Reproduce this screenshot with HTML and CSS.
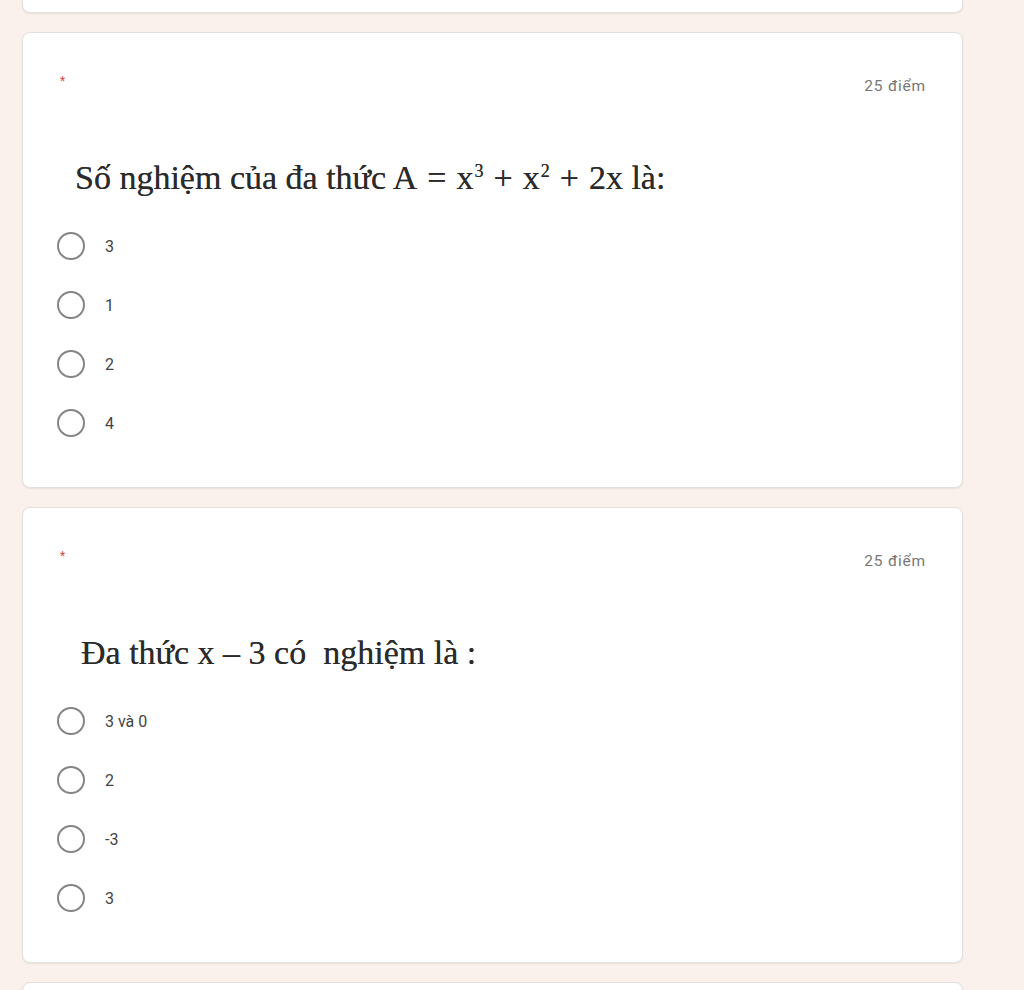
FILE: index.html
```html
<!DOCTYPE html>
<html lang="vi">
<head>
<meta charset="utf-8">
<title>Form</title>
<link rel="stylesheet" href="styles.css">
</head>
<body>
<div class="page">
  <div class="card card-prev"></div>

  <div class="card">
    <div class="card-head">
      <span class="req">*</span>
      <span class="points">25 điểm</span>
    </div>
    <div class="question q1">Số nghiệm của đa thức A<span class="op">=</span>x<sup>3</sup><span class="op">+</span>x<sup>2</sup><span class="op">+</span>2x là:</div>
    <div class="options">
      <label class="opt"><span class="radio"></span><span class="lbl">3</span></label>
      <label class="opt"><span class="radio"></span><span class="lbl">1</span></label>
      <label class="opt"><span class="radio"></span><span class="lbl">2</span></label>
      <label class="opt"><span class="radio"></span><span class="lbl">4</span></label>
    </div>
  </div>

  <div class="card">
    <div class="card-head">
      <span class="req">*</span>
      <span class="points">25 điểm</span>
    </div>
    <div class="question q2">Đa thức x – 3 có&nbsp; nghiệm là :</div>
    <div class="options">
      <label class="opt"><span class="radio"></span><span class="lbl">3 và 0</span></label>
      <label class="opt"><span class="radio"></span><span class="lbl">2</span></label>
      <label class="opt"><span class="radio"></span><span class="lbl">-3</span></label>
      <label class="opt"><span class="radio"></span><span class="lbl">3</span></label>
    </div>
  </div>

  <div class="card card-next"></div>
</div>
</body>
</html>
```

FILE: styles.css
```css
html, body {
  margin: 0;
  padding: 0;
  background: #faf1ec;
  height: 990px;
  overflow: hidden;
}
.page {
  width: 941px;
  margin-left: 22px;
  display: flex;
  flex-direction: column;
  gap: 19px;
}
.card {
  background: #fff;
  border: 1px solid #e3e0dd;
  border-radius: 8px;
  box-shadow: 0 1px 2px rgba(0,0,0,0.07);
  height: 456px;
  box-sizing: border-box;
  padding: 0 36px 0 36px;
}
.card-prev {
  height: 100px;
  margin-top: -87px;
}
.card-next {
  height: 100px;
}
.card-head {
  display: flex;
  justify-content: space-between;
  align-items: flex-start;
  padding-top: 41px;
  height: 27px;
}
.req {
  color: #dc4a45;
  font-family: "Roboto", "Liberation Sans", sans-serif;
  font-size: 12px;
  line-height: 14px;
  margin-left: 1px;
}
.points {
  font-family: "Roboto", "Liberation Sans", sans-serif;
  font-size: 15.5px;
  letter-spacing: 0.8px;
  color: #777;
  line-height: 16px;
  margin-top: 4px;
}
.question {
  font-family: "Liberation Serif", "Times New Roman", serif;
  font-size: 34px;
  color: #2b2b2b;
  line-height: 40px;
  margin-top: 57px;
  height: 40px;
  white-space: nowrap;
  text-shadow: 0 0 0.6px #555;
}
.q1 { padding-left: 16px; }
.q2 { padding-left: 22px; }
.question sup {
  font-size: 18px;
  line-height: 0;
  vertical-align: 12px;
  margin-left: 1px;
}
.question .op {
  margin: 0 10px;
}
.options {
  display: flex;
  flex-direction: column;
  gap: 31px;
  margin-top: 34px;
}
.opt {
  display: flex;
  align-items: center;
  height: 28px;
}
.radio {
  width: 24px;
  height: 24px;
  border: 2px solid #858585;
  border-radius: 50%;
  margin-left: -2px;
  flex: none;
}
.lbl {
  font-family: "Roboto", "Liberation Sans", sans-serif;
  font-size: 16px;
  color: #444;
  margin-left: 20px;
}
```
